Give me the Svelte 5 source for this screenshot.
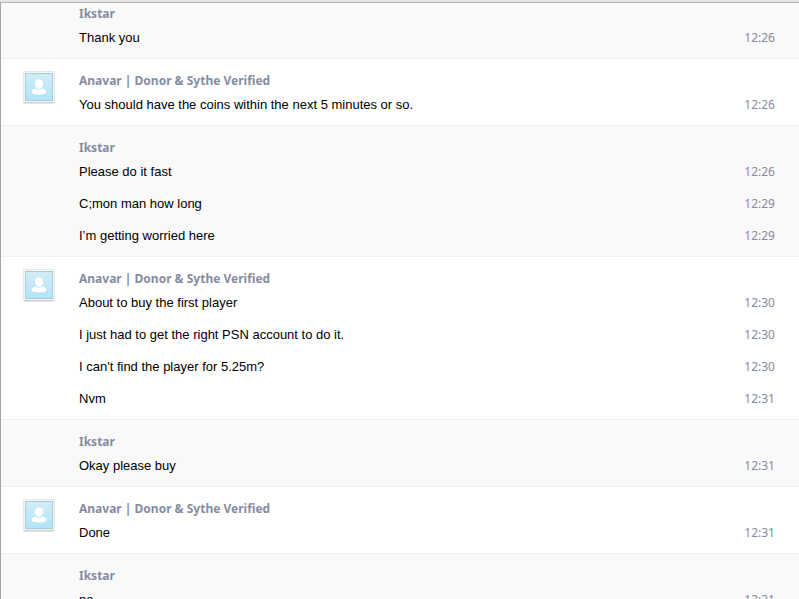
<script>
  const donor = 'Anavar | Donor & Sythe Verified';
  const groups = [
    { name: 'Ikstar', messages: [['Thank you', '12:26']] },
    { name: donor, avatar: true, messages: [['You should have the coins within the next 5 minutes or so.', '12:26']] },
    {
      name: 'Ikstar',
      messages: [
        ['Please do it fast', '12:26'],
        ['C;mon man how long', '12:29'],
        ['I’m getting worried here', '12:29']
      ]
    },
    {
      name: donor,
      avatar: true,
      messages: [
        ['About to buy the first player', '12:30'],
        ['I just had to get the right PSN account to do it.', '12:30'],
        ["I can't find the player for 5.25m?", '12:30'],
        ['Nvm', '12:31']
      ]
    },
    { name: 'Ikstar', messages: [['Okay please buy', '12:31']] },
    { name: donor, avatar: true, messages: [['Done', '12:31']] },
    { name: 'Ikstar', messages: [['no', '12:31']] }
  ];
</script>

<main class="window">
  <div class="edge"></div>
  <div class="log">
    {#each groups as group}
      <section class="group" class:other={group.avatar}>
        <div class="side">
          {#if group.avatar}
            <svg class="avatar" viewBox="0 0 32 33" aria-hidden="true">
              <defs>
                <linearGradient id="sky" x1="0" y1="0" x2="0" y2="1">
                  <stop offset="0" stop-color="#d2ecf6" />
                  <stop offset="1" stop-color="#b2e4f8" />
                </linearGradient>
              </defs>
              <rect x="0.5" y="1" width="31" height="31.500" rx="1.5" fill="#cdcdcd" />
              <rect x="0" y="0" width="32" height="31" rx="1.5" fill="#e8e8e6" />
              <rect x="1" y="1" width="30" height="30" rx="1" fill="#f6f6f4" />
              <rect x="2" y="2" width="28" height="28" fill="#a3cddc" />
              <rect x="3" y="3" width="26" height="26" fill="url(#sky)" />
              <path
                fill="#fff"
                d="M16 8.2c2.500 0 4.100 1.900 4.100 4.500 0 2.800-1.800 5.100-4.100 5.100s-4.100-2.300-4.100-5.100c0-2.600 1.600-4.500 4.100-4.500zM12.300 17.500c1.100.9 2.300 1.300 3.700 1.300s2.600-.4 3.700-1.300c2.200.5 3.700 1.700 3.700 3.500 0 1.700-2.900 2.500-7.400 2.500s-7.400-.8-7.400-2.500c0-1.800 1.500-3 3.700-3.500z"
              />
            </svg>
          {/if}
        </div>
        <div class="body">
          <h2>{group.name}</h2>
          {#each group.messages as [text, time]}
            <div class="message">
              <p>{text}</p>
              <time>{time}</time>
            </div>
          {/each}
        </div>
      </section>
    {/each}
  </div>
</main>

<style>
  .window {
    display: flex;
    flex-direction: column;
    box-sizing: border-box;
    height: 100vh;
    overflow: hidden;
    background: #f9f9f9;
    font-family: "Helvetica Neue", "Liberation Sans", Arial, sans-serif;
  }
  .edge {
    flex: none;
    height: 2px;
    background: #e6e6e6;
    border-bottom: 1px solid #b4b4b4;
  }
  .log {
    flex: 1;
    min-height: 0;
    overflow: hidden;
    border-left: 1px solid #a5a5a5;
  }
  .group {
    display: flex;
    padding: 12px 24px 4px 22px;
    border-top: 1px solid #efefef;
    background: #f9f9f9;
  }
  .group:first-child {
    padding-top: 1px;
    border-top: 0;
  }
  .other {
    background: #fff;
  }
  .side {
    flex: none;
    width: 56px;
  }
  .avatar {
    display: block;
    width: 32px;
    height: 33px;
  }
  .body {
    flex: 1;
    min-width: 0;
    padding-top: 2px;
  }
  h2 {
    margin: 0;
    color: #868c9f;
    font: bold 12px/16px "Noto Sans", sans-serif;
  }
  .message {
    display: flex;
    justify-content: space-between;
    gap: 16px;
    line-height: 16px;
    padding: 8px 0;
  }
  p {
    margin: 0;
    color: #000;
    font-size: 13px;
  }
  time {
    color: #868c9f;
    font-family: "Noto Sans", sans-serif;
    font-size: 12px;
  }
</style>
